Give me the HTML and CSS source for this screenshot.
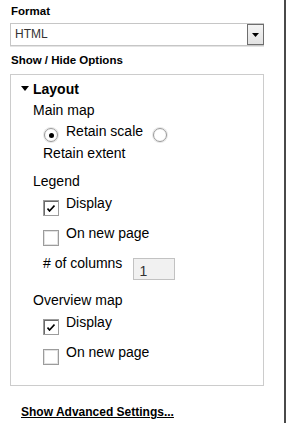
FILE: index.html
```html
<!DOCTYPE html>
<html lang="en">
<head>
  <meta charset="UTF-8">
  <title>Print Options</title>
  <link rel="stylesheet" href="styles.css">
</head>
<body>
  <div class="pane">
    <div class="field-label">Format</div>
    <div class="select">
      <span class="select-value">HTML</span>
      <span class="select-btn">
        <svg width="7" height="4" viewBox="0 0 7 4"><path d="M0 0h7L3.5 4z" fill="#000"/></svg>
      </span>
    </div>

    <div class="field-label toggle-label">Show / Hide Options</div>

    <!-- options panel -->
    <div class="options">
      <div class="section-title">
        <svg class="caret" width="8" height="5" viewBox="0 0 8 5"><path d="M0 0h8L4 5z" fill="#000"/></svg>
        Layout
      </div>

      <div class="body">
        <div class="group-title">Main map</div>
        <div class="row radio-row">
          <span class="radio checked"></span>
          <span class="text">Retain scale</span>
          <span class="radio second"></span>
        </div>
        <div class="row-text">Retain extent</div>

        <div class="group-title spaced">Legend</div>
        <div class="row">
          <span class="check checked">
            <svg width="8" height="7" viewBox="0 0 8 7"><path d="M0.5 3.5l2 2.5 5-5.5" fill="none" stroke="#000" stroke-width="1.6"/></svg>
          </span>
          <span class="text">Display</span>
        </div>
        <div class="row next">
          <span class="check"></span>
          <span class="text">On new page</span>
        </div>
        <div class="row columns-row">
          <span class="text">&#35; of columns</span>
          <span class="num-input">1</span>
        </div>

        <div class="group-title spaced">Overview map</div>
        <div class="row">
          <span class="check checked">
            <svg width="8" height="7" viewBox="0 0 8 7"><path d="M0.5 3.5l2 2.5 5-5.5" fill="none" stroke="#000" stroke-width="1.6"/></svg>
          </span>
          <span class="text">Display</span>
        </div>
        <div class="row next">
          <span class="check"></span>
          <span class="text">On new page</span>
        </div>
      </div>
    </div>

    <a class="advanced" href="#">Show Advanced Settings...</a>
  </div>
</body>
</html>
```

FILE: styles.css
```css
html, body {
  margin: 0;
  padding: 0;
  background: #fff;
}
body {
  font-family: "Liberation Sans", Arial, sans-serif;
  color: #000;
}
.pane {
  width: 274px;
  height: 423px;
  padding: 4px 0 0 10px;
  border-right: 2px solid #4a4a4a;
  box-sizing: content-box;
}
.pane {
  height: 419px;
}
.field-label {
  font-size: 11.5px;
  font-weight: bold;
  line-height: 14px;
  margin-left: 1px;
}
.toggle-label {
  margin-top: 7px;
}
.select {
  margin-top: 5px;
  width: 254px;
  height: 23px;
  box-sizing: border-box;
  border: 1px solid #c6c6c6;
  box-shadow: 0 1px 0 #e4e4e4;
  display: flex;
  justify-content: space-between;
  align-items: stretch;
}
.select-value {
  font-size: 12px;
  color: #333;
  line-height: 14px;
  padding: 3px 0 0 4px;
}
.select-btn {
  width: 17px;
  margin: 0 -1px 0 0;
  box-sizing: border-box;
  border: 1px solid #6e6e6e;
  background: linear-gradient(#f4f4f4, #e2e2e2);
  display: flex;
  align-items: center;
  justify-content: center;
}
.options {
  margin-top: 7px;
  width: 254px;
  height: 312px;
  box-sizing: border-box;
  border: 1px solid #cccccc;
  padding: 6px 0 0 10px;
}
.section-title {
  font-size: 14px;
  font-weight: bold;
  line-height: 16px;
  display: flex;
  align-items: center;
  gap: 4px;
}
.caret {
  margin-top: -1px;
}
.body {
  padding-left: 12px;
  font-size: 14px;
  line-height: 16px;
}
.group-title {
  margin-top: 5px;
}
.group-title.spaced {
  margin-top: 12px;
}
.row {
  display: flex;
  align-items: flex-start;
  height: 22px;
  margin-top: 6px;
  padding-left: 10px;
}
.row.next {
  margin-top: 8px;
}
.radio-row {
  height: 20px;
  margin-top: 5px;
}
.row-text {
  margin-top: 2px;
  padding-left: 10px;
}
.text {
  white-space: nowrap;
}
.radio {
  width: 14px;
  height: 14px;
  margin: 5px 8px 0 1px;
  box-sizing: border-box;
  border-radius: 50%;
  border: 1px solid #9a9a9a;
  background: radial-gradient(circle, #fff 55%, #e6e6e6 100%);
  box-shadow: 0 0 0 1px #e8e8e8;
  display: flex;
  align-items: center;
  justify-content: center;
}
.radio.checked::after {
  content: "";
  width: 5px;
  height: 5px;
  border-radius: 50%;
  background: #000;
}
.radio.second {
  margin-left: 10px;
}
.check {
  width: 16px;
  height: 16px;
  margin: 5px 7px 0 0;
  box-sizing: border-box;
  border: 1px solid #9c9c9c;
  box-shadow: inset 0 0 0 1px #e2e2e2;
  background: #fff;
  display: flex;
  align-items: center;
  justify-content: center;
}
.check.checked {
  box-shadow: inset 1px 1px 0 #6a6a6a, inset 0 0 0 2px #fff;
}
.columns-row {
  height: 25px;
  margin-top: 8px;
}
.num-input {
  margin: 3px 0 0 11px;
  width: 42px;
  height: 22px;
  box-sizing: border-box;
  border: 1px solid #c2c2c2;
  background: #f1f1f1;
  color: #333;
  font-size: 14px;
  line-height: 16px;
  padding: 4px 0 0 5px;
}
.advanced {
  display: inline-block;
  margin: 19px 0 0 11px;
  font-size: 12px;
  font-weight: bold;
  line-height: 14px;
  color: #000;
  text-decoration: underline;
}
```
